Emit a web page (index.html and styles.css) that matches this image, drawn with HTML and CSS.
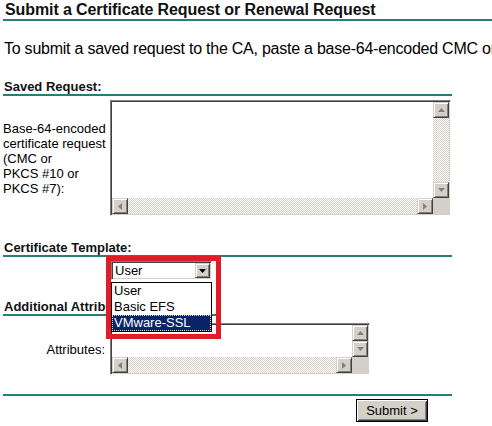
FILE: index.html
```html
<!DOCTYPE html>
<html>
<head>
<meta charset="utf-8">
<title>Submit a Certificate Request or Renewal Request</title>
<link rel="stylesheet" href="styles.css">
</head>
<body>
<h1 class="title">Submit a Certificate Request or Renewal Request</h1>
<p class="intro">To submit a saved request to the CA, paste a base-64-encoded CMC or PKCS #10 certificate request or PKCS #7 renewal request generated by an external source (such as a Web server) in the Saved Request box.</p>
<div class="content">
  <h2 class="sect sect-saved">Saved Request:</h2>
  <div class="row row-saved">
    <div class="lbl lbl-left">Base-64-encoded<br>certificate request<br>(CMC or<br>PKCS #10 or<br>PKCS #7):</div>
    <div class="ta ta-big">
      <div class="ta-body"></div>
      <div class="vbar">
        <span class="sbtn"><svg width="7" height="4" viewBox="0 0 7 4"><path d="M3.5 0L7 4H0z" fill="#808080"/></svg></span>
        <span class="track"></span>
        <span class="sbtn"><svg width="7" height="4" viewBox="0 0 7 4"><path d="M0 0H7L3.5 4z" fill="#808080"/></svg></span>
      </div>
      <div class="hbar">
        <span class="sbtn"><svg width="4" height="7" viewBox="0 0 4 7"><path d="M0 3.5L4 0V7z" fill="#808080"/></svg></span>
        <span class="track"></span>
        <span class="sbtn"><svg width="4" height="7" viewBox="0 0 4 7"><path d="M0 0L4 3.5L0 7z" fill="#808080"/></svg></span>
      </div>
      <div class="corner"></div>
    </div>
  </div>

  <h2 class="sect sect-tpl">Certificate Template:</h2>
  <div class="tplrow">
    <div class="selwrap">
      <div class="select">
        <span class="sel-text">User</span>
        <span class="sel-btn"><svg width="7" height="4" viewBox="0 0 7 4"><path d="M0 0H7L3.5 4z" fill="#000"/></svg></span>
      </div>
      <div class="mask"></div>
      <ul class="droplist">
        <li class="opt">User</li>
        <li class="opt">Basic EFS</li>
        <li class="opt opt-active">VMware-SSL</li>
      </ul>
      <div class="redbox"></div>
    </div>
  </div>

  <h2 class="sect sect-attr">Additional Attributes:</h2>
  <div class="row row-attr">
    <div class="lbl lbl-right">Attributes:</div>
    <div class="ta ta-small">
      <div class="ta-body"></div>
      <div class="vbar">
        <span class="sbtn"><svg width="7" height="4" viewBox="0 0 7 4"><path d="M3.5 0L7 4H0z" fill="#808080"/></svg></span>
        <span class="track"></span>
        <span class="sbtn"><svg width="7" height="4" viewBox="0 0 7 4"><path d="M0 0H7L3.5 4z" fill="#808080"/></svg></span>
      </div>
      <div class="hbar">
        <span class="sbtn"><svg width="4" height="7" viewBox="0 0 4 7"><path d="M0 3.5L4 0V7z" fill="#808080"/></svg></span>
        <span class="track"></span>
        <span class="sbtn"><svg width="4" height="7" viewBox="0 0 4 7"><path d="M0 0L4 3.5L0 7z" fill="#808080"/></svg></span>
      </div>
      <div class="corner"></div>
    </div>
  </div>

  <div class="rule"></div>
  <div class="actions">
    <button class="submit" type="button">Submit &gt;</button>
  </div>
</div>
</body>
</html>
```

FILE: styles.css
```css
html, body {
  margin: 0;
  padding: 0;
  overflow: hidden;
  background: #fff;
}
body {
  padding-left: 3px;
  font-family: "Liberation Sans", Arial, sans-serif;
  color: #000;
}
.title {
  margin: 1px 0 0 0;
  padding-left: 2px;
  font-size: 16px;
  font-weight: bold;
  line-height: 18px;
  height: 18px;
  letter-spacing: -0.1px;
  color: #111;
  border-bottom: 2px solid #287d78;
  white-space: nowrap;
}
.intro {
  margin: 19px 0 0 0;
  padding-left: 1px;
  font-size: 16px;
  line-height: 18px;
  letter-spacing: -0.24px;
  white-space: nowrap;
}
.content {
  width: 449px;
}
.sect {
  margin: 0;
  padding-left: 1px;
  font-size: 13px;
  font-weight: bold;
  line-height: 15px;
  height: 15px;
  color: #111;
  border-bottom: 2px solid #287d78;
  white-space: nowrap;
}
.sect-saved { margin-top: 21px; }
.sect-tpl { margin-top: 24px; }
.sect-attr { margin-top: 19px; }

.row {
  display: flex;
  align-items: center;
}
.row-saved { margin-top: 4px; }
.row-attr { margin-top: 7px; }
.lbl {
  width: 107px;
  flex: none;
  box-sizing: border-box;
  font-size: 13px;
  line-height: 15px;
}
.lbl-right {
  text-align: right;
  padding-right: 5px;
}

/* classic textarea */
.ta {
  box-sizing: border-box;
  display: grid;
  grid-template-columns: 1fr 16px;
  grid-template-rows: 1fr 16px;
  border: 1px solid;
  border-color: #808080 #fff #fff #808080;
  box-shadow: inset 1px 1px #404040, inset -1px -1px #d4d0c8;
  padding: 1px;
  background: #fff;
}
.ta-big { width: 341px; height: 116px; }
.ta-small { width: 260px; height: 52px; }
.ta-body { background: #fff; }
.vbar {
  display: flex;
  flex-direction: column;
}
.hbar {
  display: flex;
}
.track {
  flex: 1;
  background-color: #fff;
  background-image: repeating-conic-gradient(#d4d0c8 0 25%, #fff 0 50%);
  background-size: 2px 2px;
}
.sbtn {
  flex: none;
  width: 16px;
  height: 16px;
  box-sizing: border-box;
  background: #d4d0c8;
  border: 1px solid;
  border-color: #d4d0c8 #404040 #404040 #d4d0c8;
  box-shadow: inset 1px 1px #fff, inset -1px -1px #808080;
  display: flex;
  align-items: center;
  justify-content: center;
}
.corner { background: #d4d0c8; }

/* select + dropdown annotation */
.tplrow {
  margin-top: 4px;
  padding-left: 108px;
}
.selwrap {
  position: relative;
  width: 101px;
}
.select {
  box-sizing: border-box;
  width: 101px;
  height: 19px;
  display: flex;
  align-items: stretch;
  border: 1px solid;
  border-color: #808080 #fff #fff #808080;
  box-shadow: inset 1px 1px #404040, inset -1px -1px #d4d0c8;
  padding: 1px;
  background: #fff;
}
.sel-text {
  flex: 1;
  font-size: 13px;
  line-height: 15px;
  padding-left: 2px;
}
.sel-btn {
  flex: none;
  width: 15px;
  box-sizing: border-box;
  background: #d4d0c8;
  border: 1px solid;
  border-color: #d4d0c8 #404040 #404040 #d4d0c8;
  box-shadow: inset 1px 1px #fff, inset -1px -1px #808080;
  display: flex;
  align-items: center;
  justify-content: center;
}
.droplist {
  position: absolute;
  left: 0;
  top: 21px;
  width: 101px;
  margin: 0;
  padding: 0;
  list-style: none;
  box-sizing: border-box;
  border: 1px solid #000;
  background: #fff;
  z-index: 2;
}
.opt {
  height: 16px;
  box-sizing: border-box;
  font-size: 13px;
  line-height: 14px;
  padding-left: 1px;
  border: 1px solid transparent;
}
.opt-active {
  background: #0a246a;
  color: #fff;
  border: 1px dotted #d8d8b0;
}
.redbox {
  position: absolute;
  left: -5px;
  top: -5px;
  width: 115px;
  height: 83px;
  box-sizing: border-box;
  border: 5px solid #e21c26;
  z-index: 3;
}
.mask {
  position: absolute;
  left: 110px;
  top: 30px;
  width: 240px;
  height: 31px;
  background: #fff;
  z-index: 1;
}

.rule {
  margin-top: 19px;
  border-top: 2px solid #287d78;
}
.actions {
  margin-top: 3px;
  display: flex;
  justify-content: flex-end;
  padding-right: 24px;
}
.submit {
  width: 72px;
  height: 23px;
  box-sizing: border-box;
  margin: 0;
  padding: 0;
  font-family: "Liberation Sans", Arial, sans-serif;
  font-size: 13px;
  color: #000;
  background: #d4d0c8;
  border: 1px solid #000;
  border-radius: 0;
  box-shadow: inset 1px 1px #fff, inset -1px -1px #404040, inset 2px 2px #d4d0c8, inset -2px -2px #808080;
}
```
